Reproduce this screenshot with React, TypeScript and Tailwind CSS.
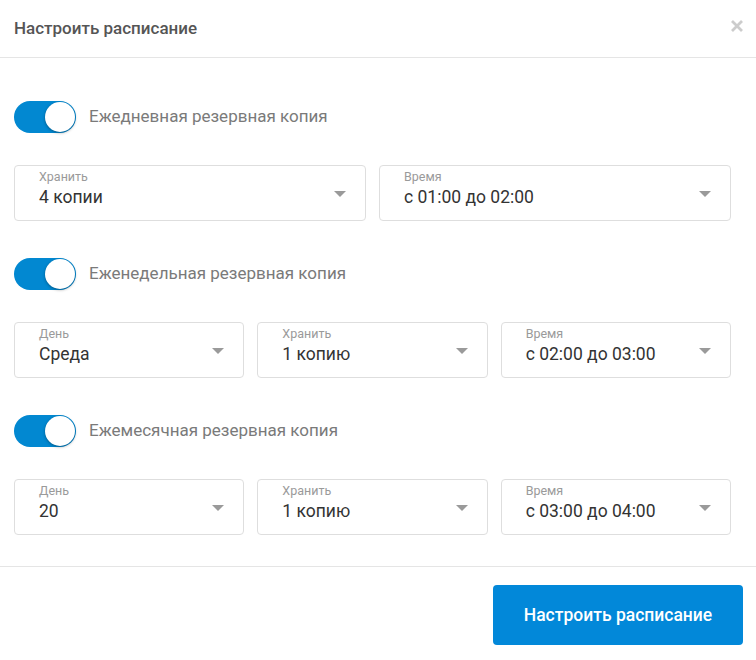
import React, { useState } from 'react';

type Field = { label: string; value: string };

function Toggle({ on, onChange }: { on: boolean; onChange: () => void }) {
  return (
    <button
      onClick={onChange}
      className={`relative h-[32px] w-[62px] shrink-0 rounded-full transition-colors ${
        on ? 'bg-[#0288d1]' : 'bg-[#cfcfcf]'
      }`}
    >
      <span
        className={`absolute top-[1px] h-[30px] w-[30px] rounded-full bg-white shadow-[0_1px_3px_rgba(0,0,0,0.35)] transition-all ${
          on ? 'left-[31px]' : 'left-[1px]'
        }`}
      />
    </button>
  );
}

function SelectBox({ label, value }: Field) {
  return (
    <div className="relative h-[56px] rounded-[4px] border border-[#dedede] bg-white pl-[24px] pr-[20px]">
      <div className="pt-[3px] text-[12.5px] leading-[16px] text-[#9a9a9a]">{label}</div>
      <div className="text-[17.5px] leading-[24px] text-[#333]">{value}</div>
      <svg
        className="absolute right-[19px] top-[25px]"
        width="12"
        height="6"
        viewBox="0 0 12 6"
      >
        <path d="M0 0h12L6 6z" fill="#9a9a9a" />
      </svg>
    </div>
  );
}

function Section({
  title,
  fields,
  cols,
}: {
  title: string;
  fields: Field[];
  cols: string;
}) {
  const [on, setOn] = useState(true);
  return (
    <div className="flex flex-col gap-[32px]">
      <div className="flex items-center gap-[13px]">
        <Toggle on={on} onChange={() => setOn(!on)} />
        <span className="text-[17px] text-[#7a7a7a]">{title}</span>
      </div>
      <div className={`grid ${cols} gap-[13px]`}>
        {fields.map((f) => (
          <SelectBox key={f.label} {...f} />
        ))}
      </div>
    </div>
  );
}

export default function App() {
  return (
    <div
      className="h-[660px] w-[756px] bg-white"
      style={{ fontFamily: 'Roboto, "Liberation Sans", sans-serif' }}
    >
      <div className="flex h-[58px] items-center justify-between border-b border-[#e5e5e5] pl-[14px] pr-[13px]">
        <h2 className="text-[17px] font-medium text-[#555]">Настроить расписание</h2>
        <button className="mb-[6px]" aria-label="Закрыть">
          <svg width="12" height="12" viewBox="0 0 12 12">
            <path d="M1 1l10 10M11 1L1 11" stroke="#cccccc" strokeWidth="2.8" />
          </svg>
        </button>
      </div>
      <div className="flex flex-col gap-[37px] border-b border-[#e5e5e5] pb-[31px] pl-[14px] pr-[25px] pt-[43px]">
        <Section
          title="Ежедневная резервная копия"
          cols="grid-cols-2"
          fields={[
            { label: 'Хранить', value: '4 копии' },
            { label: 'Время', value: 'с 01:00 до 02:00' },
          ]}
        />
        <Section
          title="Еженедельная резервная копия"
          cols="grid-cols-3"
          fields={[
            { label: 'День', value: 'Среда' },
            { label: 'Хранить', value: '1 копию' },
            { label: 'Время', value: 'с 02:00 до 03:00' },
          ]}
        />
        <Section
          title="Ежемесячная резервная копия"
          cols="grid-cols-3"
          fields={[
            { label: 'День', value: '20' },
            { label: 'Хранить', value: '1 копию' },
            { label: 'Время', value: 'с 03:00 до 04:00' },
          ]}
        />
      </div>
      <div className="flex justify-end pr-[13px] pt-[18px]">
        <button className="h-[60px] w-[250px] rounded-[4px] bg-[#0288d9] text-[17.5px] font-medium text-white">
          Настроить расписание
        </button>
      </div>
    </div>
  );
}
